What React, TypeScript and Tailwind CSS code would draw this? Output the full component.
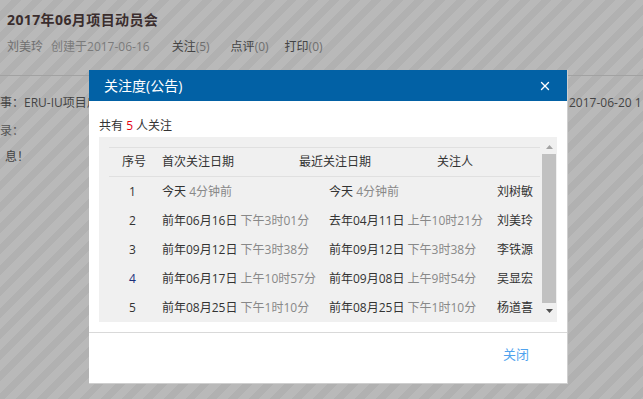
import { X } from 'lucide-react';

type Row = {
  no: number;
  firstDay: string;
  firstTime: string;
  lastDay: string;
  lastTime: string;
  name: string;
};

const rows: Row[] = [
  { no: 1, firstDay: '今天', firstTime: '4分钟前', lastDay: '今天', lastTime: '4分钟前', name: '刘树敏' },
  { no: 2, firstDay: '前年06月16日', firstTime: '下午3时01分', lastDay: '去年04月11日', lastTime: '上午10时21分', name: '刘美玲' },
  { no: 3, firstDay: '前年09月12日', firstTime: '下午3时38分', lastDay: '前年09月12日', lastTime: '下午3时38分', name: '李铁源' },
  { no: 4, firstDay: '前年06月17日', firstTime: '上午10时57分', lastDay: '前年09月08日', lastTime: '上午9时54分', name: '吴显宏' },
  { no: 5, firstDay: '前年08月25日', firstTime: '下午1时10分', lastDay: '前年08月25日', lastTime: '下午1时10分', name: '杨道喜' },
];

const font = { fontFamily: '"Open Sans", "Noto Sans CJK SC", sans-serif' };

function FollowDialog() {
  return (
    <div className="absolute left-[89px] top-[70px] flex w-[479px] flex-col border-r border-b border-[#cfcfcf] bg-white">
      <div className="flex h-[31px] items-center justify-between bg-[#0261a5] pl-[15px] pr-[15px] text-[14px] text-white">
        <span>关注度(公告)</span>
        <X className="h-[14px] w-[14px]" strokeWidth={2.4} />
      </div>

      <div className="px-[10px] pb-[10px]">
        <div className="flex h-[36px] items-center pt-[14px] text-[12px] text-[#333]">
          共有&nbsp;<span className="text-[#e60012]">5</span>&nbsp;人关注
        </div>

        <div className="relative h-[185px] overflow-hidden bg-[#f0f0f0]">
          <div className="pl-[10px] pr-[17px] pt-[10px]">
            <div className="flex h-[30px] items-center border-t border-b border-[#e0e0e0] text-[12px] text-[#333]">
              <span className="w-[48px] shrink-0 pl-[13px]">序号</span>
              <span className="w-[142px] shrink-0 pl-[5px]">首次关注日期</span>
              <span className="w-[138px] shrink-0">最近关注日期</span>
              <span>关注人</span>
            </div>
            {rows.map((r) => (
              <div key={r.no} className="flex h-[29px] items-center whitespace-nowrap text-[12px]">
                <span className={`w-[48px] shrink-0 pl-[20px] ${r.no === 4 ? 'text-[#1a2f7a]' : 'text-[#333]'}`}>{r.no}</span>
                <span className="w-[172px] shrink-0 pl-[5px]">
                  <span className="text-[#333]">{r.firstDay}</span> <span className="text-[#888]">{r.firstTime}</span>
                </span>
                <span className="w-[168px] shrink-0">
                  <span className="text-[#333]">{r.lastDay}</span> <span className="text-[#888]">{r.lastTime}</span>
                </span>
                <span className="text-[#333]">{r.name}</span>
              </div>
            ))}
          </div>

          <div className="absolute right-[1px] top-[3px] flex h-[180px] w-[14px] flex-col items-center">
            <svg width="9" height="14" viewBox="0 0 9 14" className="shrink-0">
              <path d="M1 9 L4.5 5 L8 9 Z" fill="#a3a3a3" />
            </svg>
            <div className="h-[149px] w-[14px] bg-[#c1c1c1]" />
            <svg width="9" height="14" viewBox="0 0 9 14" className="shrink-0">
              <path d="M1 6 L4.5 10 L8 6 Z" fill="#505050" />
            </svg>
          </div>
        </div>
      </div>

      <div className="flex h-[51px] justify-end border-t border-[#d9d9d9] pr-[38px] pt-[12px] text-[13px] text-[#4fa3ee]">
        关闭
      </div>
    </div>
  );
}

export default function App() {
  return (
    <div
      className="relative h-[399px] w-[643px] overflow-hidden bg-[repeating-linear-gradient(135deg,#b9b9b9_0px,#b9b9b9_8px,#b1b1b1_8px,#b1b1b1_15px)]"
      style={font}
    >
      <div className="px-[7px] pt-[9px]">
        <h1 className="text-[14px] font-bold leading-[22px] tracking-[0.4px] text-[#3a2d2d]">2017年06月项目动员会</h1>
        <div className="mt-[6px] flex items-center text-[12px] leading-[20px] text-[#6f6f6f]">
          <span>刘美玲</span>
          <span className="ml-[8px] text-[#7b7b7b]">创建于2017-06-16</span>
          <span className="ml-[22px]"><span className="text-[#444]">关注</span>(5)</span>
          <span className="ml-[21px]"><span className="text-[#444]">点评</span>(0)</span>
          <span className="ml-[16px]"><span className="text-[#444]">打印</span>(0)</span>
        </div>
      </div>
      <div className="mt-[18px] border-t border-[#a2a2a2]" />
      <div className="flex items-center whitespace-nowrap pt-[17px] text-[12px] leading-[20px] text-[#444]">
        <span className="w-[569px] shrink-0">事：ERU-IU项目启动</span>
        <span className="shrink-0">2017-06-20 1</span>
      </div>
      <div className="pt-[8px] text-[12px] leading-[20px] text-[#555]">录：</div>
      <div className="pl-[5px] pt-[6px] text-[12px] leading-[20px] text-[#444]">息！</div>

      <FollowDialog />
    </div>
  );
}
